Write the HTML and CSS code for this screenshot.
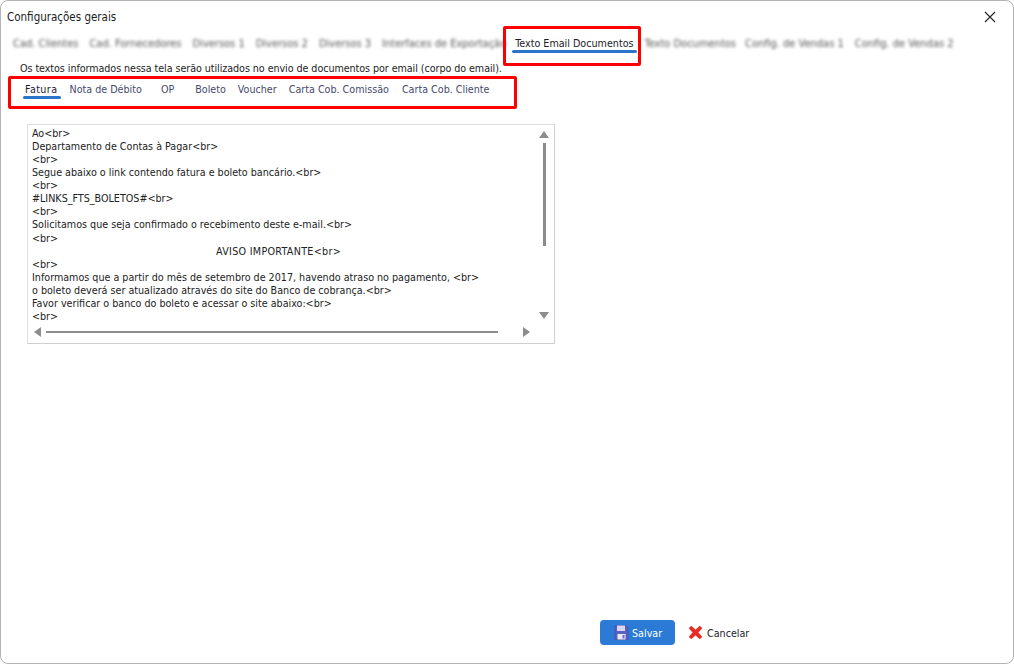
FILE: index.html
```html
<!DOCTYPE html>
<html lang="pt-BR">
<head>
<meta charset="utf-8">
<title>Configurações gerais</title>
<link rel="stylesheet" href="styles.css">
</head>
<body>
<div class="window">
  <header class="titlebar">
    <span class="title">Configurações gerais</span>
    <svg class="close" width="12" height="12" viewBox="0 0 12 12"><path d="M1 1l10 10M11 1L1 11" stroke="#222" stroke-width="1.1" fill="none"/></svg>
  </header>
  <nav class="tabs">
    <span class="tab blur">Cad. Clientes</span>
    <span class="tab blur">Cad. Fornecedores</span>
    <span class="tab blur">Diversos 1</span>
    <span class="tab blur">Diversos 2</span>
    <span class="tab blur">Diversos 3</span>
    <span class="tab blur">Interfaces de Exportação</span>
    <span class="tab active">Texto Email Documentos<i class="mark"></i></span>
    <span class="tab blur t-doc">Texto Documentos</span>
    <span class="tab blur">Config. de Vendas 1</span>
    <span class="tab blur">Config. de Vendas 2</span>
  </nav>
  <p class="info">Os textos informados nessa tela serão utilizados no envio de documentos por email (corpo do email).</p>
  <nav class="subtabs">
    <span class="sub active">Fatura<i class="mark"></i></span>
    <span class="sub s-nota">Nota de Débito</span>
    <span class="sub s-op">OP</span>
    <span class="sub s-bol">Boleto</span>
    <span class="sub">Voucher</span>
    <span class="sub s-com">Carta Cob. Comissão</span>
    <span class="sub">Carta Cob. Cliente</span>
  </nav>
  <section class="editor">
<pre class="text">Ao&lt;br&gt;
Departamento de Contas à Pagar&lt;br&gt;
&lt;br&gt;
Segue abaixo o link contendo fatura e boleto bancário.&lt;br&gt;
&lt;br&gt;
#LINKS_FTS_BOLETOS#&lt;br&gt;
&lt;br&gt;
Solicitamos que seja confirmado o recebimento deste e-mail.&lt;br&gt;
&lt;br&gt;
<span class="center">AVISO IMPORTANTE&lt;br&gt;</span>
&lt;br&gt;
Informamos que a partir do mês de setembro de 2017, havendo atraso no pagamento, &lt;br&gt;
o boleto deverá ser atualizado através do site do Banco de cobrança.&lt;br&gt;
Favor verificar o banco do boleto e acessar o site abaixo:&lt;br&gt;
&lt;br&gt;</pre>
    <div class="vscroll">
      <i class="arrow up"></i>
      <i class="vtrack"><b class="vthumb"></b></i>
      <i class="arrow down"></i>
    </div>
    <div class="hscroll">
      <i class="arrow left"></i>
      <i class="htrack"></i>
      <i class="arrow right"></i>
    </div>
  </section>
  <footer class="footer">
    <button class="btn save">
      <svg width="15" height="17" viewBox="0 0 15 17"><path d="M1 1.5h11l2 2v12H1z" fill="#5a5fc0" stroke="#4a4fa8" stroke-width=".8"/><rect x="3" y="1.5" width="8" height="5.5" fill="#d5d8f2"/><rect x="3.5" y="10" width="8" height="5.5" fill="#e9e9f6"/><rect x="8.5" y="11" width="2" height="3.5" fill="#6a6fc8"/></svg>
      <span class="label">Salvar</span>
    </button>
    <button class="btn cancel">
      <svg width="15" height="15" viewBox="0 0 15 15"><path d="M1.2 3.2L3.2 1.2 7.5 5 11.8 1.2 13.8 3.2 10 7.5 13.8 11.8 11.8 13.8 7.5 10 3.2 13.8 1.2 11.8 5 7.5z" fill="#ee2a22" stroke="#c4261c" stroke-width=".8"/></svg>
      <span class="label">Cancelar</span>
    </button>
  </footer>
  <i class="callout c-tab"></i>
  <i class="callout c-sub"></i>
</div>
</body>
</html>
```
FILE: styles.css
```css
* { box-sizing: border-box; }
html, body { margin: 0; padding: 0; background: #fff; }
body { width: 1014px; height: 664px; overflow: hidden; }
.window { position: relative; width: 1014px; height: 664px; border: 1px solid #b4b4b4; border-radius: 8px; background: #fff; display: flex; flex-direction: column; font-family: "DejaVu Sans Condensed", "DejaVu Sans", sans-serif; font-stretch: condensed; font-size: 10.67px; color: #1c1c1c; }
.titlebar { display: flex; justify-content: space-between; align-items: center; height: 17px; margin-top: 7px; padding: 0 17px 0 6px; }
.title { font-size: 11.5px; }
.close { display: block; }
.tabs { display: flex; height: 20px; margin-top: 8px; padding-left: 12px; align-items: center; }
.tab { position: relative; white-space: nowrap; margin-right: 11px; }
.tab.blur { color: #555; font-size: 11px; filter: blur(1.4px); }
.tab.t-doc { margin-right: 9px; }
.tab.active { margin: 0 11px 0 -2px; color: #1c1c2c; }
.mark { position: absolute; left: -3px; right: -3px; bottom: -3px; height: 3px; background: #2b74cc; border-radius: 2px; }
.sub .mark { left: -2px; right: -4px; }
.info { margin: 9px 0 0 19px; height: 14px; line-height: 14px; letter-spacing: -0.06px; }
.subtabs { display: flex; height: 20px; margin-top: 3px; padding-left: 24px; align-items: center; color: #464a6c; }
.sub { position: relative; white-space: nowrap; margin-right: 12px; }
.sub.active { color: #1c1c2c; letter-spacing: 0.4px; }
.s-nota { margin-right: 19px; }
.s-op { margin-right: 21px; }
.s-com { margin-right: 13px; }
.editor { display: grid; grid-template-columns: 1fr 20px; grid-template-rows: 1fr 20px; width: 528px; height: 220px; margin: 25px 0 0 26px; border: 1px solid #dedede; border-bottom-color: #cfcfcf; border-right-color: #cfcfcf; }
.text { margin: 0; padding: 2px 0 0 4px; overflow: hidden; font: inherit; line-height: 13.07px; color: #222; white-space: pre; }
.center { display: inline-block; padding-left: 184px; letter-spacing: 0.3px; }
.vscroll { display: flex; flex-direction: column; align-items: center; padding: 6px 0 4px; grid-row: 1; grid-column: 2; }
.vtrack { flex: 1; width: 3px; padding-top: 5px; display: block; }
.vthumb { display: block; width: 3px; height: 103px; background: #8c8c8c; }
.hscroll { grid-row: 2; grid-column: 1; display: flex; align-items: center; padding: 0 0 3px 6px; }
.htrack { display: block; width: 452px; height: 2px; margin: 0 25px 0 5px; background: #8c8c8c; }
.arrow { display: block; width: 0; height: 0; border-style: solid; border-color: transparent; }
.up { border-width: 0 5px 7px; border-bottom-color: #8c8c8c; }
.down { border-width: 7px 5px 0; border-top-color: #8c8c8c; }
.left { border-width: 5px 7px 5px 0; border-right-color: #8c8c8c; }
.right { border-width: 5px 0 5px 7px; border-left-color: #8c8c8c; }
.footer { display: flex; align-items: center; margin-top: auto; padding: 0 0 18px 599px; }
.btn { display: flex; align-items: center; height: 25px; border: 0; border-radius: 4px; padding: 0; font: inherit; cursor: pointer; }
.label { position: relative; top: 1px; }
.save { width: 75px; gap: 3px; padding-left: 14px; background: #2b7bd6; color: #fff; }
.cancel { gap: 4px; margin-left: 13px; background: transparent; color: #1c1c2c; }
.callout { position: absolute; border: 3px solid #f00; border-radius: 2px; pointer-events: none; }
.c-tab { left: 502px; top: 25px; width: 138px; height: 40px; }
.c-sub { left: 7px; top: 75px; width: 509px; height: 33px; }
```
